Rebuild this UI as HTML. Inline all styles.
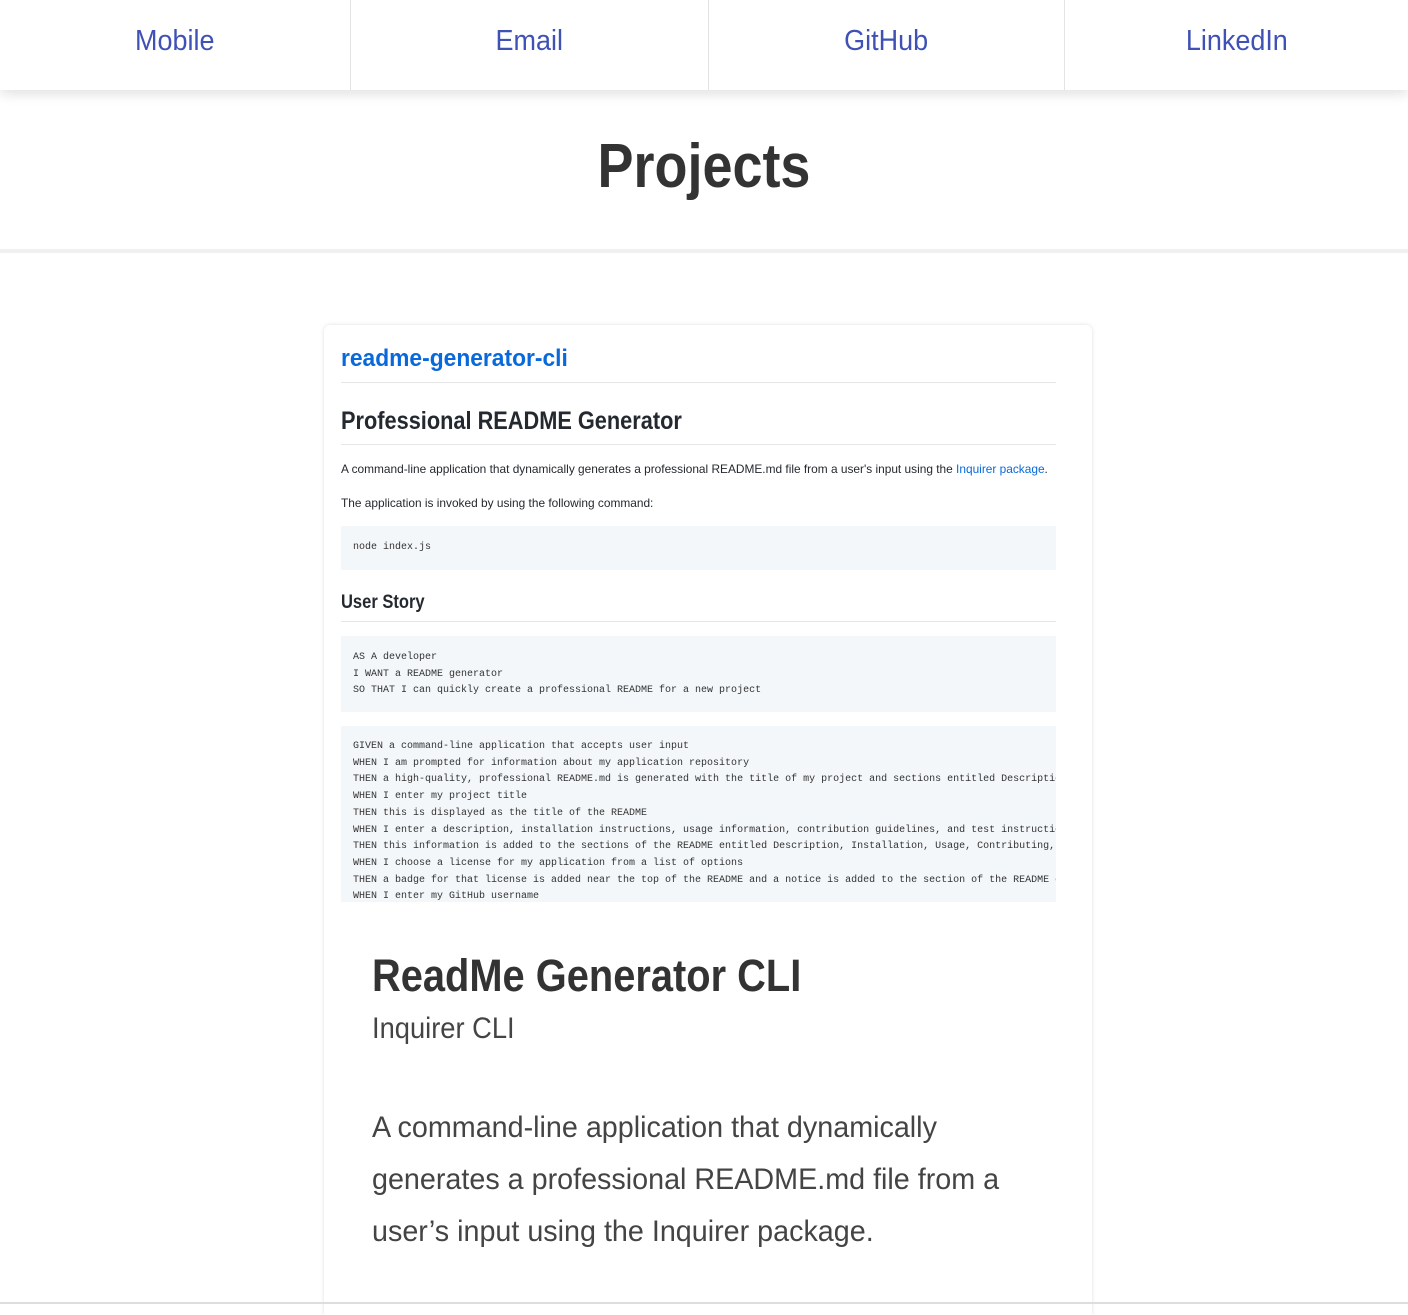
<!DOCTYPE html>
<html><head><meta charset="utf-8"><style>
*{margin:0;padding:0;box-sizing:border-box}
body{width:1408px;height:1310px;overflow:hidden;background:#fff;font-family:"Liberation Sans",sans-serif;color:#333}
nav{display:flex;height:90px;box-shadow:0 4px 12px rgba(0,0,0,.12);position:relative;z-index:2;background:#fff}
nav div{display:flex;align-items:center;justify-content:center;color:#3f51b5;font-size:29px;border-right:1px solid #e3e3e3;padding-bottom:8px}
nav div span{display:inline-block;transform:scaleX(.93)}
h1{text-align:center;font-size:62px;font-weight:bold;color:#333;line-height:1;position:absolute;width:100%;top:136px;transform:scaleX(.87)}
.hr{position:absolute;top:249px;left:0;width:1408px;height:4px;background:#f0f0f0}
.card{position:absolute;left:324px;top:325px;width:768px;height:990px;background:#fff;box-shadow:0 0 4px rgba(0,0,0,.12);border-radius:6px 6px 0 0;overflow:hidden}
.shot{position:absolute;left:0;top:0;width:768px;height:577px;overflow:hidden}
.shot .a{position:absolute;left:17px;top:20px;color:#0969da;font-size:24px;font-weight:bold;transform:scaleX(.95);transform-origin:left}
.line{position:absolute;left:17px;width:715px;height:1px;background:#e6e6e6}
.shot .h{position:absolute;left:17px;top:82px;font-size:25px;font-weight:bold;color:#24292f;transform:scaleX(.87);transform-origin:left}
.shot p{position:absolute;left:17px;font-size:12px;color:#24292f;transform:scaleX(.99);transform-origin:left;white-space:nowrap}
.pre{position:absolute;left:17px;width:715px;background:#f4f7fa;font-family:"Liberation Mono",monospace;font-size:10px;color:#333;padding-left:12px;white-space:pre;overflow:hidden;line-height:16.7px}
.body{position:absolute;left:48px;top:625px;width:800px}
.t{font-size:45px;font-weight:bold;color:#333;transform:scaleX(.885);transform-origin:left}
.s{font-size:30px;color:#444;margin-top:10px;transform:scaleX(.91);transform-origin:left}
.d{font-size:30px;color:#444;line-height:52px;margin-top:56px;transform:scaleX(.957);transform-origin:left;white-space:nowrap}
.bot{position:absolute;left:0;top:1302px;width:1408px;height:2px;background:#ddd}
</style></head><body>
<nav><div style="width:351px"><span>Mobile</span></div><div style="width:358px"><span>Email</span></div><div style="width:356px"><span>GitHub</span></div><div style="width:343px;border:0"><span>LinkedIn</span></div></nav>
<h1>Projects</h1>
<div class="hr"></div>
<div class="card">
<div class="shot">
<div class="a">readme-generator-cli</div>
<div class="line" style="top:57px"></div>
<div class="h">Professional README Generator</div>
<div class="line" style="top:119px"></div>
<p style="top:137px">A command-line application that dynamically generates a professional README.md file from a user's input using the <span style="color:#0969da">Inquirer package</span>.</p>
<p style="top:171px">The application is invoked by using the following command:</p>
<div class="pre" style="top:201px;height:44px;padding-top:14px">node index.js</div>
<div class="h" style="top:267px;font-size:19px">User Story</div>
<div class="line" style="top:296px"></div>
<div class="pre" style="top:311px;height:76px;padding-top:14px">AS A developer
I WANT a README generator
SO THAT I can quickly create a professional README for a new project</div>
<div class="pre" style="top:401px;height:180px;padding-top:13px">GIVEN a command-line application that accepts user input
WHEN I am prompted for information about my application repository
THEN a high-quality, professional README.md is generated with the title of my project and sections entitled Description
WHEN I enter my project title
THEN this is displayed as the title of the README
WHEN I enter a description, installation instructions, usage information, contribution guidelines, and test instructions
THEN this information is added to the sections of the README entitled Description, Installation, Usage, Contributing, and
WHEN I choose a license for my application from a list of options
THEN a badge for that license is added near the top of the README and a notice is added to the section of the README ent
WHEN I enter my GitHub username</div>
</div>
<div class="body">
<div class="t">ReadMe Generator CLI</div>
<div class="s">Inquirer CLI</div>
<div class="d">A command-line application that dynamically<br>generates a professional README.md file from a<br>user’s input using the Inquirer package.</div>
</div>
</div>
<div class="bot"></div>
</body></html>
